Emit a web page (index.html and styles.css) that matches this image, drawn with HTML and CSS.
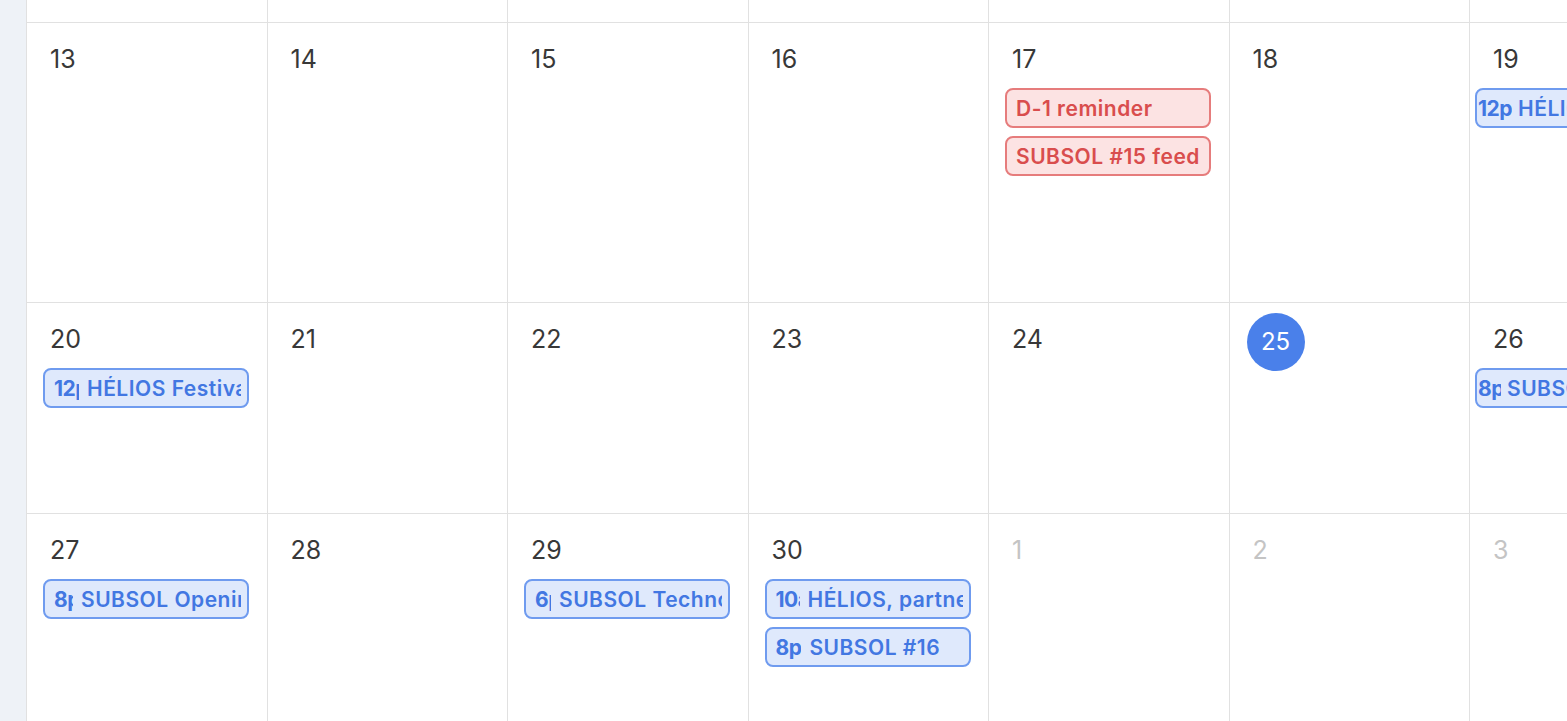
FILE: index.html
```html
<!DOCTYPE html>
<html lang="en">
<head>
<meta charset="utf-8">
<title>Calendar</title>
<link rel="stylesheet" href="styles.css">
</head>
<body>
<div class="app">
  <aside class="rail"></aside>
  <div class="month">
    <div class="cell"></div><div class="cell"></div><div class="cell"></div><div class="cell"></div><div class="cell"></div><div class="cell"></div><div class="cell"></div>

    <div class="cell"><div class="date"><span class="num">13</span></div></div>
    <div class="cell"><div class="date"><span class="num">14</span></div></div>
    <div class="cell"><div class="date"><span class="num">15</span></div></div>
    <div class="cell"><div class="date"><span class="num">16</span></div></div>
    <div class="cell"><div class="date"><span class="num">17</span></div>
      <div class="events">
        <div class="chip red"><span class="title">D-1 reminder</span></div>
        <div class="chip red"><span class="title">SUBSOL #15 feed</span></div>
      </div>
    </div>
    <div class="cell"><div class="date"><span class="num">18</span></div></div>
    <div class="cell"><div class="date"><span class="num">19</span></div>
      <div class="events">
        <div class="chip blue edge"><span class="time">12p</span><span class="title">HÉLIOS Festival</span></div>
      </div>
    </div>

    <div class="cell"><div class="date"><span class="num">20</span></div>
      <div class="events">
        <div class="chip blue"><span class="time tw25">12p</span><span class="title">HÉLIOS Festival</span></div>
      </div>
    </div>
    <div class="cell"><div class="date"><span class="num">21</span></div></div>
    <div class="cell"><div class="date"><span class="num">22</span></div></div>
    <div class="cell"><div class="date"><span class="num">23</span></div></div>
    <div class="cell"><div class="date"><span class="num">24</span></div></div>
    <div class="cell"><div class="date"><span class="num today">25</span></div></div>
    <div class="cell"><div class="date"><span class="num">26</span></div>
      <div class="events">
        <div class="chip blue edge"><span class="time tw23">8pm</span><span class="title">SUBSOL Opening Night</span></div>
      </div>
    </div>

    <div class="cell"><div class="date"><span class="num">27</span></div>
      <div class="events">
        <div class="chip blue"><span class="time tw19">8pm</span><span class="title">SUBSOL Opening Night</span></div>
      </div>
    </div>
    <div class="cell"><div class="date"><span class="num">28</span></div></div>
    <div class="cell"><div class="date"><span class="num">29</span></div>
      <div class="events">
        <div class="chip blue"><span class="time tw16">6pm</span><span class="title">SUBSOL Techno Workshop</span></div>
      </div>
    </div>
    <div class="cell"><div class="date"><span class="num">30</span></div>
      <div class="events">
        <div class="chip blue"><span class="time tw24">10a</span><span class="title">HÉLIOS, partner meeting</span></div>
        <div class="chip blue"><span class="time">8p</span><span class="title">SUBSOL #16</span></div>
      </div>
    </div>
    <div class="cell"><div class="date"><span class="num other">1</span></div></div>
    <div class="cell"><div class="date"><span class="num other">2</span></div></div>
    <div class="cell"><div class="date"><span class="num other">3</span></div></div>
  </div>
</div>
</body>
</html>
```

FILE: styles.css
```css
html, body {
  margin: 0;
  padding: 0;
  height: 100%;
  overflow: hidden;
  background: #ffffff;
  font-family: "Inter", "Open Sans", "Liberation Sans", sans-serif;
}

.app {
  display: flex;
  height: 100%;
}

.rail {
  flex: 0 0 26px;
  background: #eef2f7;
}

.month {
  flex: 0 0 auto;
  display: grid;
  grid-template-columns: repeat(7, 240.5px);
  grid-template-rows: 23px 280px 211px 240px;
  background: #ffffff;
}

.cell {
  box-sizing: border-box;
  border-left: 1px solid #e1e1e1;
  border-bottom: 1px solid #e1e1e1;
  padding: 12px 17px 0 16px;
  min-width: 0;
}

.date {
  height: 49px;
  display: flex;
  align-items: center;
}

.num {
  display: block;
  padding-left: 7px;
  font-size: 25px;
  font-weight: 400;
  color: #383838;
  line-height: 1;
}

.num.other {
  color: #c4c4c4;
}

.num.today {
  align-self: flex-start;
  width: 58px;
  height: 58px;
  margin-top: -2px;
  margin-left: 1px;
  padding: 0;
  border-radius: 50%;
  background: #4a80ea;
  color: #ffffff;
  font-size: 24px;
  line-height: 58px;
  text-align: center;
}

.events {
  margin-top: 4px;
  display: flex;
  flex-direction: column;
  gap: 8px;
}

.chip {
  box-sizing: border-box;
  height: 40px;
  width: 206px;
  border-radius: 8px;
  border: 2px solid;
  padding: 0 6px 0 9px;
  display: flex;
  align-items: center;
  gap: 8px;
  overflow: hidden;
  white-space: nowrap;
  font-size: 21px;
  letter-spacing: 0.5px;
}

.chip.blue {
  background: #dfe9fc;
  border-color: #6f9bef;
  color: #4277e2;
}

.chip.red {
  background: #fce3e3;
  border-color: #e67c7c;
  color: #d94d4d;
}

.chip.edge {
  margin-left: -11px;
  padding-left: 1px;
  width: 240px;
  gap: 6px;
}

.time {
  flex: 0 0 auto;
  overflow: hidden;
  font-weight: 700;
  letter-spacing: -0.5px;
}

.title {
  flex: 1 1 auto;
  min-width: 0;
  overflow: hidden;
  font-weight: 600;
}

.tw16 { width: 16px; }
.tw19 { width: 19px; }
.tw23 { width: 23px; }
.tw24 { width: 24px; }
.tw25 { width: 25px; }
```
